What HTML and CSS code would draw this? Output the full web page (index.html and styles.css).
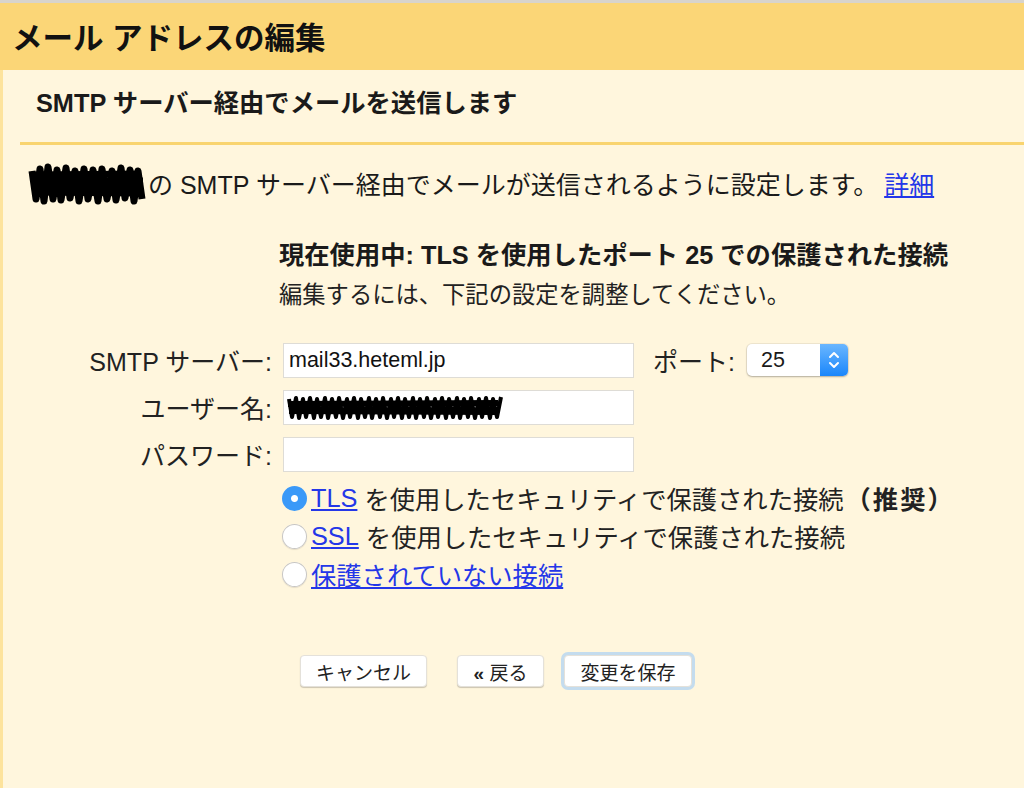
FILE: index.html
```html
<!DOCTYPE html>
<html lang="ja">
<head>
    <meta charset="UTF-8">
    <title>メール アドレスの編集</title>
    <link rel="stylesheet" href="styles.css">
</head>
<body>
    <div class="topline"></div>
    <div class="header">メール アドレスの編集</div>
    <div class="panel">
        <div class="subtitle">SMTP サーバー経由でメールを送信します</div>
        <div class="rule"></div>

        <div class="desc">
            <svg class="scribble" width="118" height="44" viewBox="0 0 118 44">
                <path d="M4 10 L8 38 L12 8 L16 40 L20 6 L25 38 L29 9 L33 39 L38 7 L42 37 L47 10 L51 40 L56 8 L60 38 L65 9 L70 40 L74 8 L79 38 L84 10 L88 39 L93 7 L97 37 L102 9 L106 40 L110 10 L114 38" fill="none" stroke="#000" stroke-width="7" stroke-linejoin="round"/>
                <path d="M3 22 L115 20 M5 31 L113 32 M6 14 L112 13" stroke="#000" stroke-width="7"/>
            </svg>
            <span>の SMTP サーバー経由でメールが送信されるように設定します。</span>
            <a href="#" class="link more">詳細</a>
        </div>

        <div class="status">
            <div class="status-title">現在使用中: TLS を使用したポート 25 での保護された接続</div>
            <div class="status-note">編集するには、下記の設定を調整してください。</div>
        </div>

        <div class="form">
            <label class="label">SMTP サーバー:</label>
            <div class="field-row">
                <input class="text" type="text" value="mail33.heteml.jp">
                <span class="port-label">ポート:</span>
                <div class="select">
                    <span class="select-value">25</span>
                    <span class="select-arrows">
                        <svg width="14" height="24" viewBox="0 0 14 24">
                            <path d="M3 9 L7 5 L11 9 M3 15 L7 19 L11 15" fill="none" stroke="#fff" stroke-width="2" stroke-linecap="round" stroke-linejoin="round"/>
                        </svg>
                    </span>
                </div>
            </div>

            <label class="label">ユーザー名:</label>
            <div class="field-row">
                <div class="text masked">
                    <svg width="222" height="28" viewBox="0 0 222 28">
                        <path d="M3 6 L6 24 L10 5 L13 25 L17 6 L20 24 L24 5 L28 25 L31 6 L35 24 L39 5 L42 25 L46 6 L50 24 L53 5 L57 25 L61 6 L64 24 L68 5 L72 25 L75 6 L79 24 L83 5 L86 25 L90 6 L94 24 L97 5 L101 25 L105 6 L108 24 L112 5 L116 25 L119 6 L123 24 L127 5 L130 25 L134 6 L138 24 L141 5 L145 25 L149 6 L152 24 L156 5 L160 25 L163 6 L167 24 L171 5 L174 25 L178 6 L182 24 L185 5 L189 25 L193 6 L196 24 L200 5 L204 25 L207 6 L211 24 L215 4" fill="none" stroke="#000" stroke-width="4" stroke-linejoin="round"/>
                        <path d="M2 11 L212 10 M3 18 L210 19" stroke="#000" stroke-width="6"/>
                    </svg>
                </div>
            </div>

            <label class="label">パスワード:</label>
            <div class="field-row">
                <input class="text" type="password" value="">
            </div>
        </div>

        <div class="options">
            <label class="option">
                <input type="radio" name="sec" checked>
                <a href="#" class="link">TLS</a>
                <span>を使用したセキュリティで保護された接続<b class="rec">（推奨）</b></span>
            </label>
            <label class="option">
                <input type="radio" name="sec">
                <a href="#" class="link">SSL</a>
                <span>を使用したセキュリティで保護された接続</span>
            </label>
            <label class="option">
                <input type="radio" name="sec">
                <a href="#" class="link">保護されていない接続</a>
            </label>
        </div>

        <div class="buttons">
            <button class="btn cancel">キャンセル</button>
            <button class="btn back"><b>«</b> 戻る</button>
            <button class="btn save">変更を保存</button>
        </div>
    </div>
</body>
</html>
```

FILE: styles.css
```css
* {
    margin: 0;
    padding: 0;
    box-sizing: border-box;
}

body {
    background-color: #fff6dd;
    font-family: "Liberation Sans", "Noto Sans CJK JP", sans-serif;
    color: #1a1a1a;
    height: 788px;
    overflow: hidden;
}

.topline {
    height: 3px;
    background-color: #d8d4cc;
}

.header {
    background-color: #fbd677;
    height: 67px;
    padding-left: 12px;
    font-size: 30.5px;
    font-weight: bold;
    line-height: 70px;
    color: #111;
}

.panel {
    border-left: 3px solid #fde39c;
    height: 718px;
}

.subtitle {
    height: 72px;
    padding-left: 33px;
    font-size: 25.3px;
    font-weight: bold;
    line-height: 66px;
}

.rule {
    height: 3px;
    margin-left: 17px;
    background-color: #f9d46f;
}

.desc {
    display: flex;
    align-items: center;
    height: 76px;
    padding-left: 25px;
    font-size: 25px;
}

.scribble {
    margin-right: 2px;
}

.link {
    color: #2437e8;
    text-decoration: underline;
}

.more {
    margin-left: 6px;
}

.status {
    padding-left: 276px;
    margin-top: 15px;
}

.status-title {
    font-size: 25.3px;
    font-weight: bold;
    line-height: 38px;
}

.status-note {
    font-size: 23.3px;
    line-height: 42px;
    color: #222;
}

.form {
    display: grid;
    grid-template-columns: 269px 1fr;
    column-gap: 11px;
    row-gap: 11px;
    margin-top: 26px;
    align-items: center;
}

.label {
    text-align: right;
    font-size: 25px;
    color: #222;
}

.field-row {
    display: flex;
    align-items: center;
}

.text {
    width: 351px;
    height: 35px;
    border: 1px solid #dedcd6;
    background-color: #fff;
    font-family: "Liberation Sans", "Noto Sans CJK JP", sans-serif;
    font-size: 21.5px;
    padding: 0 5px;
    color: #111;
}

.masked {
    display: flex;
    align-items: center;
    padding: 0 2px;
}

.port-label {
    margin-left: 19px;
    font-size: 25px;
    color: #222;
}

.select {
    display: flex;
    margin-left: 12px;
    width: 101px;
    height: 32px;
    border-radius: 5px;
    background-color: #fff;
    box-shadow: 0 1px 2px rgba(0, 0, 0, 0.25), 0 0 0 1px rgba(0, 0, 0, 0.06);
    overflow: hidden;
}

.select-value {
    flex: 1;
    padding-left: 14px;
    font-size: 21.5px;
    line-height: 32px;
}

.select-arrows {
    width: 28px;
    display: flex;
    align-items: center;
    justify-content: center;
    background: linear-gradient(#6ab6ff, #1a86fb);
}

.options {
    display: flex;
    flex-direction: column;
    gap: 8px;
    margin-top: 11px;
    padding-left: 279px;
    font-size: 25.3px;
}

.option {
    display: flex;
    align-items: center;
    height: 30px;
}

.option input {
    appearance: none;
    width: 25px;
    height: 25px;
    margin-right: 4px;
    border-radius: 50%;
    background-color: #fff;
    box-shadow: inset 0 0 0 1px #c8c6c2, 0 1px 1px rgba(0, 0, 0, 0.1);
}

.option input:checked {
    background: radial-gradient(circle, #fff 0 3px, #3a99f8 4px);
    box-shadow: none;
}

.option span {
    margin-left: 7px;
    color: #222;
}

.rec {
    font-weight: bold;
    margin-left: 2px;
    letter-spacing: 2px;
}

.buttons {
    display: flex;
    align-items: center;
    margin-top: 66px;
    padding-left: 297px;
}

.btn {
    height: 32px;
    padding: 0 10px;
    font-family: "Liberation Sans", "Noto Sans CJK JP", sans-serif;
    font-size: 19px;
    color: #222;
    background-color: #fff;
    border: 1px solid #e4e1da;
    border-radius: 4px;
    box-shadow: 0 1px 1px rgba(0, 0, 0, 0.2);
}

.cancel {
    width: 127px;
}

.back {
    width: 87px;
    margin-left: 30px;
}

.save {
    width: 128px;
    margin-left: 20px;
    box-shadow: 0 0 0 3px #c4dcee, 0 1px 1px rgba(0, 0, 0, 0.2);
}
```
